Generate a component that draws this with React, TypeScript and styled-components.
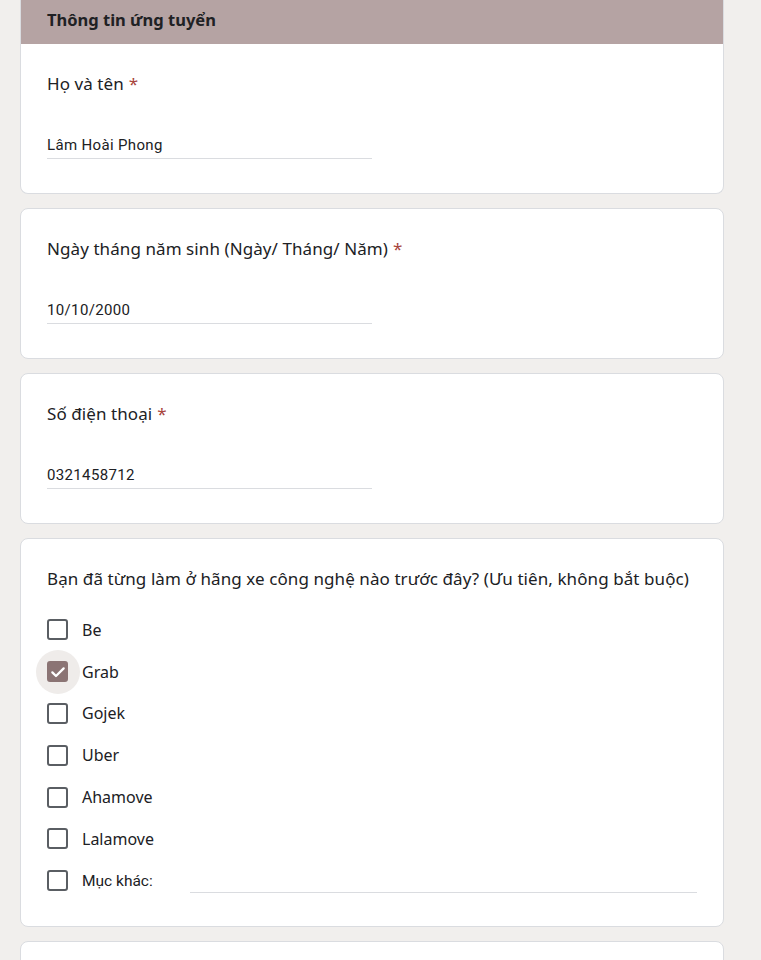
import React from "react";
import styled, { createGlobalStyle, css } from "styled-components";

const GlobalStyle = createGlobalStyle`
  html, body {
    margin: 0;
    padding: 0;
    background: #f1efed;
  }
  * { box-sizing: border-box; }
`;

const Page = styled.div`
  width: 704px;
  margin-left: 20px;
  display: flex;
  flex-direction: column;
  gap: 14px;
  font-family: "Noto Sans", "Open Sans", sans-serif;
  color: #202124;
`;

const Card = styled.div<{ $header?: boolean }>`
  background: #fff;
  border: 1px solid #dadce0;
  border-radius: 8px;
  ${(p) =>
    p.$header &&
    css`
      border-top: none;
      border-radius: 0 0 8px 8px;
      overflow: hidden;
    `}
`;

const SectionHeader = styled.div`
  height: 44px;
  background: #b5a3a3;
  padding: 0 26px 6px 27px;
  margin: 0 -1px;
  display: flex;
  align-items: center;
  font-size: 16.5px;
  font-weight: 700;
  color: #202124;
`;

const Body = styled.div<{ $top?: number; $bottom?: number }>`
  padding: ${(p) => p.$top ?? 28}px 26px ${(p) => p.$bottom ?? 34}px;
`;

const Label = styled.div`
  font-size: 17px;
  line-height: 24px;
  letter-spacing: 0.08px;
`;

const Star = styled.span`
  color: #a8453c;
  margin-left: 5px;
`;

const TextInput = styled.div`
  margin-top: 37px;
  width: 325px;
  height: 26px;
  padding-top: 2px;
  border-bottom: 1px solid #dadce0;
  font-family: Roboto, "Liberation Sans", sans-serif;
  font-size: 15px;
  line-height: 20px;
  letter-spacing: 0.35px;
  color: #202124;
`;

const Options = styled.div`
  margin-top: 18px;
  display: flex;
  flex-direction: column;
`;

const OptionRow = styled.div`
  height: 41.8px;
  display: flex;
  align-items: center;
`;

const BoxWrap = styled.span`
  position: relative;
  z-index: 0;
  display: flex;
`;

const Box = styled.span<{ $checked?: boolean }>`
  position: relative;
  width: 21px;
  height: 21px;
  flex: none;
  border: 2.6px solid #5a5e63;
  border-radius: 3px;
  display: flex;
  align-items: center;
  justify-content: center;
  ${(p) =>
    p.$checked &&
    css`
      background: #8b7474;
      border-color: #8b7474;
      &::before {
        content: "";
        position: absolute;
        left: 50%;
        top: 50%;
        width: 44px;
        height: 44px;
        margin: -22px 0 0 -22px;
        border-radius: 50%;
        background: #efecea;
        z-index: -1;
      }
    `}
`;

const OptionText = styled.span<{ $other?: boolean }>`
  margin-left: 14px;
  font-size: 16px;
  ${(p) =>
    p.$other &&
    css`
      font-family: Roboto, "Liberation Sans", sans-serif;
      font-size: 15.5px;
      width: 108px;
      flex: none;
    `}
`;

const OtherInput = styled.div`
  flex: 1;
  align-self: flex-end;
  margin-bottom: 9px;
  height: 1px;
  background: #dadce0;
`;

const Check = () => (
  <svg width="16" height="16" viewBox="0 0 24 24" fill="none">
    <path d="M3.5 12.5l5.5 5.5L20.5 6.5" stroke="#fff" strokeWidth="3.4" strokeLinecap="round" strokeLinejoin="round" />
  </svg>
);

const options = ["Be", "Grab", "Gojek", "Uber", "Ahamove", "Lalamove"];

const Field = ({ label, value, top }: { label: string; value: string; top?: number }) => (
  <Body $top={top}>
    <Label>
      {label}
      <Star>*</Star>
    </Label>
    <TextInput>{value}</TextInput>
  </Body>
);

export default function App() {
  return (
    <>
      <GlobalStyle />
      <Page>
        <Card $header>
          <SectionHeader>Thông tin ứng tuyển</SectionHeader>
          <Field label="Họ và tên" value="Lâm Hoài Phong" />
        </Card>
        <Card>
          <Field label="Ngày tháng năm sinh (Ngày/ Tháng/ Năm)" value="10/10/2000" />
        </Card>
        <Card>
          <Field label="Số điện thoại" value="0321458712" />
        </Card>
        <Card>
          <Body $bottom={24}>
            <Label>Bạn đã từng làm ở hãng xe công nghệ nào trước đây? (Ưu tiên, không bắt buộc)</Label>
            <Options>
              {options.map((o) => (
                <OptionRow key={o}>
                  <BoxWrap>
                    <Box $checked={o === "Grab"}>{o === "Grab" && <Check />}</Box>
                  </BoxWrap>
                  <OptionText>{o}</OptionText>
                </OptionRow>
              ))}
              <OptionRow>
                <BoxWrap>
                  <Box />
                </BoxWrap>
                <OptionText $other>Mục khác:</OptionText>
                <OtherInput />
              </OptionRow>
            </Options>
          </Body>
        </Card>
        <Card>
          <Body>
            <Label>&nbsp;</Label>
          </Body>
        </Card>
      </Page>
    </>
  );
}
